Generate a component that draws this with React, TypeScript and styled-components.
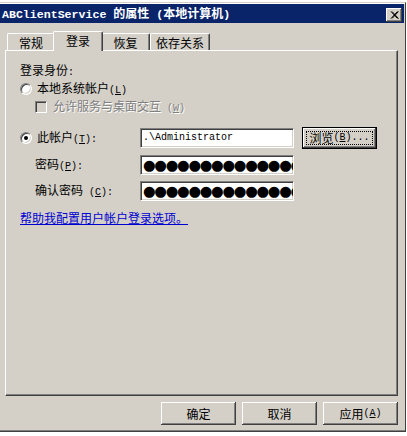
import React from "react";
import styled, { createGlobalStyle } from "styled-components";

const FACE = "#d4d0c8";
const HI = "#ffffff";
const SH = "#808080";
const DK = "#404040";

const Global = createGlobalStyle`
  html, body { margin: 0; padding: 0; background: #fff; }
  body {
    font-family: "Noto Sans CJK SC", "Liberation Sans", sans-serif;
    font-size: 12px;
    color: #000;
  }
`;

const Desktop = styled.div`
  width: 407px;
  height: 436px;
  overflow: hidden;
  background: #fff;
  padding-top: 2px;
  box-sizing: border-box;
`;

const Window = styled.div`
  width: 406px;
  box-sizing: border-box;
  background: ${FACE};
  border-top: 1px solid ${FACE};
  border-right: 1px solid ${DK};
  border-bottom: 1px solid ${DK};
  padding: 1px 1px 1px 0;
  box-shadow: inset 0 1px ${HI}, inset 0 -1px ${SH};
  display: flex;
  flex-direction: column;
`;

const TitleBar = styled.div`
  height: 19px;
  background: #0a246a;
  display: flex;
  align-items: center;
  justify-content: space-between;
  padding: 0 2px 0 2px;
`;

const Title = styled.div`
  color: #fff;
  font-weight: bold;
  font-size: 12px;
  line-height: 14px;
  white-space: nowrap;
  font-family: "Noto Sans CJK SC", sans-serif;
`;

const TitleLatin = styled.span`
  font-family: "Liberation Mono", monospace;
  font-size: 11.6px;
  font-weight: bold;
`;

const CloseButton = styled.div`
  width: 16px;
  height: 14px;
  align-self: flex-end;
  margin-bottom: 1px;
  background: ${FACE};
  box-shadow: inset -1px -1px ${DK}, inset 1px 1px ${HI}, inset -2px -2px ${SH};
  display: flex;
  align-items: center;
  justify-content: center;
`;

const Body = styled.div`
  padding: 8px 6px 5px 5px;
  display: flex;
  flex-direction: column;
`;

const TabRow = styled.div`
  display: flex;
  align-items: flex-end;
  height: 19px;
  padding-left: 2px;
  position: relative;
  z-index: 1;
`;

const Tab = styled.div<{ $w: number; $active?: boolean }>`
  width: ${(p) => p.$w}px;
  height: ${(p) => (p.$active ? 20 : 17)}px;
  margin: ${(p) => (p.$active ? "0 -2px -1px -2px" : "0")};
  position: relative;
  z-index: ${(p) => (p.$active ? 2 : 1)};
  box-sizing: border-box;
  background: ${FACE};
  border-top: 1px solid ${HI};
  border-left: 1px solid ${HI};
  border-right: 1px solid ${DK};
  border-top-left-radius: 2px;
  border-top-right-radius: 2px;
  box-shadow: inset -1px 0 ${SH};
  text-align: center;
  font-size: 12px;
  line-height: 16px;
  padding-top: 1px;
`;

const Panel = styled.div`
  height: 346px;
  box-sizing: border-box;
  border-top: 1px solid ${HI};
  border-left: 1px solid ${HI};
  border-right: 1px solid ${DK};
  border-bottom: 1px solid ${DK};
  box-shadow: inset -1px -1px ${SH};
  padding: 12px 0 0 14px;
  display: flex;
  flex-direction: column;
  align-items: flex-start;
`;

const Acc = styled.span`
  font-family: "Liberation Mono", monospace;
  font-size: 10px;
`;

const Heading = styled.div`
  line-height: 14px;
  height: 14px;
`;

const OptionRow = styled.div<{ $indent?: number; $top: number; $disabled?: boolean }>`
  display: flex;
  align-items: center;
  gap: ${(p) => (p.$indent ? 6 : 5)}px;
  height: 14px;
  line-height: 14px;
  margin-top: ${(p) => p.$top}px;
  padding-left: ${(p) => p.$indent ?? 0}px;
  color: ${(p) => (p.$disabled ? SH : "#000")};
  text-shadow: ${(p) => (p.$disabled ? `1px 1px 0 ${HI}` : "none")};
`;

const Radio = styled.span<{ $checked?: boolean }>`
  width: 12px;
  height: 12px;
  box-sizing: border-box;
  border-radius: 50%;
  background: #fff;
  border: 1px solid;
  border-color: ${SH} ${HI} ${HI} ${SH};
  box-shadow: inset 1px 1px ${DK}, inset -1px -1px ${FACE};
  display: flex;
  align-items: center;
  justify-content: center;
  flex: none;
  &::after {
    content: "";
    width: 4px;
    height: 4px;
    border-radius: 50%;
    background: ${(p) => (p.$checked ? "#000" : "transparent")};
  }
`;

const CheckBox = styled.span`
  width: 12px;
  height: 12px;
  box-sizing: border-box;
  background: ${FACE};
  border: 1px solid;
  border-color: ${SH} ${HI} ${HI} ${SH};
  box-shadow: inset 1px 1px ${DK}, inset -1px -1px ${FACE};
  flex: none;
`;

const AccountGrid = styled.div`
  display: grid;
  grid-template-columns: 112px 154px 75px;
  column-gap: 8px;
  row-gap: 6px;
  align-items: center;
  margin-top: 13px;
`;

const FieldLabel = styled.div<{ $indent?: number }>`
  display: flex;
  align-items: center;
  gap: 5px;
  line-height: 14px;
  padding-left: ${(p) => p.$indent ?? 0}px;
`;

const Field = styled.div`
  height: 20px;
  box-sizing: border-box;
  background: #fff;
  border: 1px solid;
  border-color: ${SH} ${HI} ${HI} ${SH};
  box-shadow: inset 1px 1px ${DK}, inset -1px -1px ${FACE};
  padding: 0 3px 0 2px;
  overflow: hidden;
  white-space: nowrap;
  font-family: "Liberation Mono", monospace;
  font-size: 10px;
  line-height: 18px;
`;

const Dots = styled.span`
  font-family: "DejaVu Sans", sans-serif;
  font-size: 14.5px;
  line-height: 18px;
  letter-spacing: -1.3px;
`;

const Button = styled.button<{ $default?: boolean; $h?: number }>`
  width: 75px;
  height: ${(p) => p.$h ?? 23}px;
  box-sizing: border-box;
  background: ${FACE};
  border: ${(p) => (p.$default ? "1px solid #000" : "none")};
  box-shadow: inset -1px -1px ${DK}, inset 1px 1px ${HI}, inset -2px -2px ${SH};
  font-family: "Noto Sans CJK SC", sans-serif;
  font-size: 12px;
  line-height: 14px;
  color: #000;
  padding: 0;
  position: relative;
  display: flex;
  align-items: center;
  justify-content: center;
  &::after {
    content: "";
    display: ${(p) => (p.$default ? "block" : "none")};
    position: absolute;
    inset: 3px;
    border: 1px dotted #000;
  }
`;

const HelpLink = styled.a`
  margin-top: 10px;
  line-height: 14px;
  color: #0000d0;
  text-decoration: underline;
  cursor: pointer;
`;

const Footer = styled.div`
  display: flex;
  justify-content: flex-end;
  gap: 6px;
  margin-top: 6px;
`;

const CloseGlyph = () => (
  <svg width="9" height="8" viewBox="0 0 9 8">
    <path d="M1 0.5 L7.5 7.5 M2 0.5 L8.5 7.5 M7.5 0.5 L1 7.5 M8.5 0.5 L2 7.5" stroke="#000" strokeWidth="1" />
  </svg>
);

export default function App() {
  const dots = "●".repeat(22);
  return (
    <>
      <Global />
      <Desktop>
        <Window>
          <TitleBar>
            <Title>
              <TitleLatin>ABClientService </TitleLatin>的属性<TitleLatin> (</TitleLatin>本地计算机<TitleLatin>)</TitleLatin>
            </Title>
            <CloseButton>
              <CloseGlyph />
            </CloseButton>
          </TitleBar>
          <Body>
            <TabRow>
              <Tab $w={48}>常规</Tab>
              <Tab $w={50} $active>登录</Tab>
              <Tab $w={49}>恢复</Tab>
              <Tab $w={60}>依存关系</Tab>
            </TabRow>
            <Panel>
              <Heading>
                登录身份<Acc>:</Acc>
              </Heading>
              <OptionRow $top={5}>
                <Radio />
                <span>
                  本地系统帐户<Acc>(<u>L</u>)</Acc>
                </span>
              </OptionRow>
              <OptionRow $top={4} $indent={15} $disabled>
                <CheckBox />
                <span>
                  允许服务与桌面交互<Acc> (<u>W</u>)</Acc>
                </span>
              </OptionRow>
              <AccountGrid>
                <FieldLabel>
                  <Radio $checked />
                  <span>
                    此帐户<Acc>(<u>T</u>):</Acc>
                  </span>
                </FieldLabel>
                <Field>.\Administrator</Field>
                <Button $default $h={22}>
                  浏览<Acc>(<u>B</u>)...</Acc>
                </Button>
                <FieldLabel $indent={15}>
                  <span>
                    密码<Acc>(<u>P</u>):</Acc>
                  </span>
                </FieldLabel>
                <Field>
                  <Dots>{dots}</Dots>
                </Field>
                <span />
                <FieldLabel $indent={15}>
                  <span>
                    确认密码<Acc> (<u>C</u>):</Acc>
                  </span>
                </FieldLabel>
                <Field>
                  <Dots>{dots}</Dots>
                </Field>
                <span />
              </AccountGrid>
              <HelpLink>帮助我配置用户帐户登录选项。</HelpLink>
            </Panel>
            <Footer>
              <Button>确定</Button>
              <Button>取消</Button>
              <Button>
                应用<Acc> (<u>A</u>)</Acc>
              </Button>
            </Footer>
          </Body>
        </Window>
      </Desktop>
    </>
  );
}
